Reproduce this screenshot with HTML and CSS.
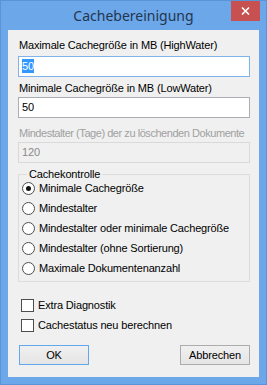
FILE: index.html
```html
<!DOCTYPE html>
<html lang="de">

<head>
    <meta charset="UTF-8">
    <meta name="viewport" content="width=device-width, initial-scale=1.0">
    <title>Cachebereinigung</title>
    <link rel="stylesheet" href="styles.css">
</head>

<body>
    <div class="fenster">
        <div class="titelleiste">
            <span></span>
            <span class="titel">Cachebereinigung</span>
            <span class="schliessen">
                <svg width="9" height="8" viewBox="0 0 9 8">
                    <path d="M1 0.5 L8 7.5 M8 0.5 L1 7.5" stroke="#fff" stroke-width="1.6" fill="none"/>
                </svg>
            </span>
        </div>

        <div class="inhalt">
            <div class="beschriftung">Maximale Cachegröße in MB (HighWater)</div>
            <div class="eingabe aktiv"><span class="markiert">50</span></div>

            <div class="beschriftung abstand-klein">Minimale Cachegröße in MB (LowWater)</div>
            <div class="eingabe">50</div>

            <div class="beschriftung gesperrt abstand-gross eng">Mindestalter (Tage) der zu löschenden Dokumente</div>
            <div class="eingabe gesperrt">120</div>

            <div class="gruppe">
                <div class="gruppe-titel">Cachekontrolle</div>
                <div class="option"><span class="radio an"></span>Minimale Cachegröße</div>
                <div class="option"><span class="radio"></span>Mindestalter</div>
                <div class="option"><span class="radio"></span>Mindestalter oder minimale Cachegröße</div>
                <div class="option"><span class="radio"></span>Mindestalter (ohne Sortierung)</div>
                <div class="option"><span class="radio"></span>Maximale Dokumentenanzahl</div>
            </div>

            <div class="haken-liste">
                <div class="option"><span class="haken"></span>Extra Diagnostik</div>
                <div class="option"><span class="haken"></span>Cachestatus neu berechnen</div>
            </div>

            <div class="knoepfe">
                <div class="knopf standard">OK</div>
                <div class="knopf">Abbrechen</div>
            </div>
        </div>
    </div>
</body>

</html>
```

FILE: styles.css
```css
/* Resetleme */
* {
    margin: 0;
    padding: 0;
    box-sizing: border-box;
}

body {
    font-family: "Liberation Sans", Arial, sans-serif;
    font-size: 11px;
    letter-spacing: -0.15px;
    color: #000;
}

/* Fenster */
.fenster {
    width: 267px;
    height: 385px;
    background-color: #6ba7e9;
    border: 1px solid #5a93d6;
    padding: 0 7px 7px 7px;
}

.titelleiste {
    height: 29px;
    display: grid;
    grid-template-columns: 1fr auto 1fr;
    align-items: start;
}

.titel {
    font-family: "Noto Sans", sans-serif;
    font-size: 14px;
    letter-spacing: 0;
    line-height: 30px;
    color: #23364f;
}

.schliessen {
    justify-self: end;
    width: 29px;
    height: 20px;
    background-color: #c75050;
    display: flex;
    align-items: center;
    justify-content: center;
    margin-right: -1px;
}

.inhalt {
    height: 347px;
    background-color: #f0f0f0;
    padding: 9px 9px 0 10px;
}

/* Felder */
.beschriftung {
    line-height: 13px;
    padding-left: 1px;
    white-space: nowrap;
}

.beschriftung.eng {
    letter-spacing: -0.45px;
}

.abstand-klein {
    margin-top: 5px;
}

.abstand-gross {
    margin-top: 9px;
}

.beschriftung.gesperrt {
    color: #a0a0a0;
}

.eingabe {
    height: 21px;
    margin-top: 4px;
    border: 1px solid #abadb3;
    background-color: #fff;
    line-height: 19px;
    padding-left: 3px;
}

.beschriftung + .eingabe {
    margin-top: 2px;
}

.eingabe.aktiv {
    margin-top: 4px;
    border-color: #7eb4ea;
}

.eingabe.gesperrt {
    background-color: #f0f0f0;
    border-color: #d9d9d9;
    color: #8a8a8a;
}

.markiert {
    background-color: #3399ff;
    color: #fff;
    padding: 1px 0;
}

/* Gruppe */
.gruppe {
    margin-top: 11px;
    border: 1px solid #dcdcdc;
    padding: 0 0 3px 3px;
}

.gruppe-titel {
    width: fit-content;
    margin: -7px 0 -3px 5px;
    padding: 0 2px;
    line-height: 13px;
    background-color: #f0f0f0;
}

.option {
    height: 20px;
    display: flex;
    align-items: center;
    gap: 4px;
    white-space: nowrap;
}

.radio {
    width: 13px;
    height: 13px;
    border-radius: 50%;
    border: 1px solid #4d4d4d;
    background-color: #fff;
    display: flex;
    align-items: center;
    justify-content: center;
}

.radio.an::after {
    content: "";
    width: 5px;
    height: 5px;
    border-radius: 50%;
    background-color: #111;
}

.haken-liste {
    margin-top: 13px;
    padding-left: 3px;
}

.haken {
    width: 13px;
    height: 13px;
    border: 1px solid #4d4d4d;
    background-color: #fff;
}

/* Knoepfe */
.knoepfe {
    margin-top: 10px;
    display: flex;
    justify-content: space-between;
    padding-left: 1px;
}

.knopf {
    width: 70px;
    height: 20px;
    border: 1px solid #acacac;
    background: linear-gradient(#f0f0f0, #e5e5e5);
    text-align: center;
    line-height: 18px;
}

.knopf.standard {
    border-color: #63a7ec;
}
```
